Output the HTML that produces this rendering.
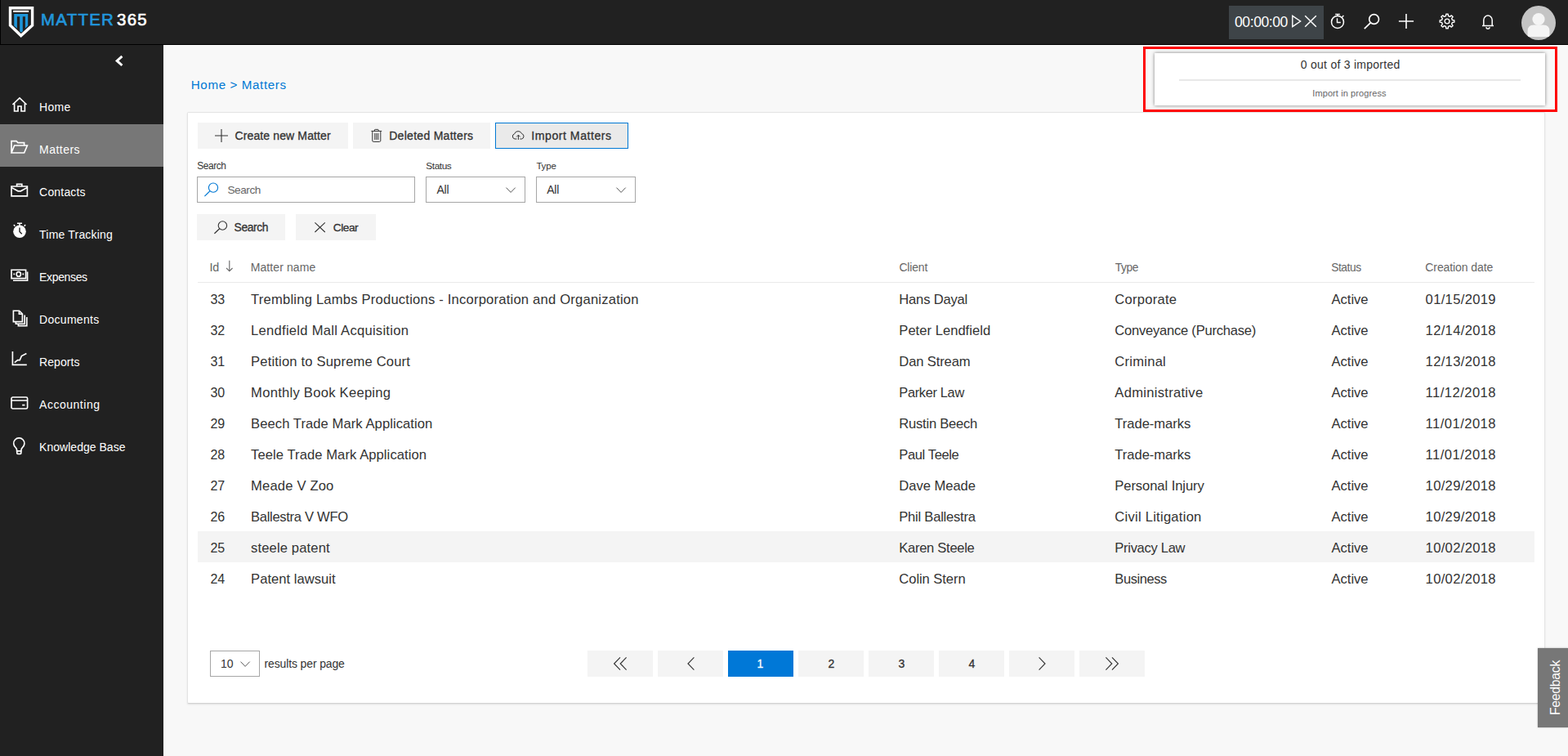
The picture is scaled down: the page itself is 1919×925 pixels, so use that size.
<!DOCTYPE html>
<html lang="en">
<head>
<meta charset="utf-8">
<title>Matter365 - Matters</title>
<style>
html,body{margin:0;padding:0}
body{width:1919px;height:925px;overflow:hidden;position:relative;background:#f8f8f8;font-family:"Liberation Sans", sans-serif;color:#333}
.a{position:absolute;box-sizing:border-box}
.t{position:absolute;white-space:pre;color:#333}
svg{overflow:visible}
.g{display:contents}
a.g{text-decoration:none;color:inherit}
</style>
</head>
<body>
<header class="g">
<div class="a" style="left:0px;top:0px;width:1919px;height:55px;background:#212121;border-bottom:1px solid #000;border-left:1px solid #000;"></div>
<svg class="a" style="left:10px;top:7px;" width="32" height="40" viewBox="0 0 32 40">
<path d="M2.5 2.7 H29.6 V24 L15.7 36.6 L2.5 24 Z" fill="none" stroke="#fff" stroke-width="3.4" stroke-linejoin="miter"/>
<rect x="6.2" y="5.8" width="18.9" height="2.2" fill="#fff"/>
<path d="M7.25 10.1 H24.2 V24.6 L20.9 27.8 V13.3 H17.8 V31.2 L16 32.8 L14.2 31.2 V13.3 H10.9 V27.8 L7.25 24.6 Z" fill="#1e96d9"/>
</svg>
<span class="t" style="left:50.10px;top:14.00px;font-size:20.4px;line-height:20.4px;letter-spacing:1.283px;color:#2196dc;-webkit-text-stroke:0.65px currentColor;">MATTER</span>
<span class="t" style="left:143.10px;top:14.00px;font-size:20.4px;line-height:20.4px;letter-spacing:1.210px;color:#fff;-webkit-text-stroke:0.65px currentColor;">365</span>
<div class="a" style="left:1504px;top:7px;width:116px;height:41px;background:#3e4448;"></div>
<span class="t" style="left:1511.00px;top:19.00px;font-size:17.57px;line-height:17.57px;letter-spacing:-0.428px;color:#fff;">00:00:00</span>
<svg class="a" style="left:1580px;top:17px;" width="14" height="18" viewBox="0 0 14 18"><path d="M1.8 2.4 L11.6 9 L1.8 15.6 Z" fill="none" stroke="#fff" stroke-width="1.4" stroke-linejoin="miter"/></svg>
<svg class="a" style="left:1596px;top:18px;" width="16" height="16" viewBox="0 0 16 16"><path d="M1.2 1.2 L14.8 14.8 M14.8 1.2 L1.2 14.8" fill="none" stroke="#fff" stroke-width="1.5"/></svg>
<svg class="a" style="left:1627px;top:15px;" width="20" height="21" viewBox="0 0 20 21"><circle cx="10" cy="11.9" r="7.5" fill="none" stroke="#fff" stroke-width="1.5"/><path d="M7.2 2.5 H12.8 M10 2.5 V4.4 M9.5 7.2 V12.5 H13.8 M15.6 6 L17.4 3.9" fill="none" stroke="#fff" stroke-width="1.4"/></svg>
<svg class="a" style="left:1668px;top:16px;" width="22" height="20" viewBox="0 0 22 20"><circle cx="13.6" cy="7.5" r="5.9" fill="none" stroke="#fff" stroke-width="1.6"/><path d="M9.6 11.6 L1.8 19.2" stroke="#fff" stroke-width="1.7" fill="none"/></svg>
<svg class="a" style="left:1711px;top:16px;" width="20" height="20" viewBox="0 0 20 20"><path d="M10 0.9 V19.1 M0.9 10 H19.1" stroke="#fff" stroke-width="1.6" fill="none"/></svg>
<svg class="a" style="left:1761px;top:16px;" width="20" height="20" viewBox="0 0 20 20"><path d="M16.42 8.46 L18.82 8.82 L18.82 11.18 L16.42 11.54 L15.63 13.45 L17.08 15.40 L15.40 17.08 L13.45 15.63 L11.54 16.42 L11.18 18.82 L8.82 18.82 L8.46 16.42 L6.55 15.63 L4.60 17.08 L2.92 15.40 L4.37 13.45 L3.58 11.54 L1.18 11.18 L1.18 8.82 L3.58 8.46 L4.37 6.55 L2.92 4.60 L4.60 2.92 L6.55 4.37 L8.46 3.58 L8.82 1.18 L11.18 1.18 L11.54 3.58 L13.45 4.37 L15.40 2.92 L17.08 4.60 L15.63 6.55 Z" fill="none" stroke="#fff" stroke-width="1.4" stroke-linejoin="round"/><circle cx="10" cy="10" r="2.9" fill="none" stroke="#fff" stroke-width="1.4"/></svg>
<svg class="a" style="left:1812px;top:17px;" width="18" height="19" viewBox="0 0 18 19"><path d="M2 14.4 H16 M3.8 14.2 V7.6 A5.2 5.6 0 0 1 14.2 7.6 V14.2 M7 16.2 A2 2 0 0 0 11 16.2" fill="none" stroke="#fff" stroke-width="1.5"/></svg>
<svg class="a" style="left:1862px;top:7px" width="42" height="42" viewBox="0 0 42 42"><defs><clipPath id="av"><circle cx="21" cy="21" r="21"/></clipPath></defs><circle cx="21" cy="21" r="21" fill="#c4c4c4"/><g clip-path="url(#av)" fill="#f4f4f4"><circle cx="21" cy="16.5" r="7.6"/><path d="M7.6 38 V31 Q7.6 23.5 15 23.5 H27 Q34.4 23.5 34.4 31 V38 Z"/></g></svg>
</header>
<nav class="g">
<div class="a" style="left:0px;top:55px;width:200px;height:870px;background:#212121;"></div>
<svg class="a" style="left:140px;top:67px;" width="12" height="15" viewBox="0 0 12 15"><path d="M9.4 1.8 L3.2 7.4 L9.4 13" fill="none" stroke="#fff" stroke-width="3"/></svg>
<a class="g nav-item">
<svg class="a" style="left:14px;top:118px;" width="20" height="20" viewBox="0 0 20 20"><path d="M1.4 10 L10 1.8 L18.6 10 M3.6 8.6 V18 H8 V12 H12 V18 H16.4 V8.6" fill="none" stroke="#fff" stroke-width="1.65"/></svg>
<span class="t" style="left:48.10px;top:124.00px;font-size:14px;line-height:14px;letter-spacing:0.280px;color:#fff;">Home</span>
</a>
<a class="g nav-item active">
<div class="a" style="left:0px;top:152px;width:200px;height:52px;background:#777777;"></div>
<svg class="a" style="left:13px;top:171px;" width="22" height="18" viewBox="0 0 22 18"><path d="M1 16 V1.6 H7 L9 3.6 H16.6 V7 M1 16 L4.6 7 H20.4 L16.6 16 Z" fill="none" stroke="#fff" stroke-width="1.65"/></svg>
<span class="t" style="left:48.10px;top:176.00px;font-size:14px;line-height:14px;letter-spacing:0.454px;color:#fff;">Matters</span>
</a>
<a class="g nav-item">
<svg class="a" style="left:13px;top:224px;" width="22" height="17" viewBox="0 0 22 17"><path d="M1 4 H20.4 V15.8 H1 Z M7.6 4 V1.4 H13.8 V4 M1 5.4 L9 9.8 H12.4 L20.4 5.4" fill="none" stroke="#fff" stroke-width="1.65"/></svg>
<span class="t" style="left:48.10px;top:228.00px;font-size:14px;line-height:14px;letter-spacing:0.179px;color:#fff;">Contacts</span>
</a>
<a class="g nav-item">
<svg class="a" style="left:15px;top:272px;" width="18" height="20" viewBox="0 0 18 20"><circle cx="9" cy="11.2" r="7.8" fill="#fff"/><path d="M6 1.2 H12 M9 1.2 V4 M14.6 4.6 L16.2 3 M1.8 3 L3.4 4.6" stroke="#fff" stroke-width="1.5" fill="none"/><path d="M9 6.4 V11.4 L11.8 14.2" stroke="#212121" stroke-width="1.4" fill="none"/></svg>
<span class="t" style="left:48.10px;top:280.00px;font-size:14px;line-height:14px;letter-spacing:0.195px;color:#fff;">Time Tracking</span>
</a>
<a class="g nav-item">
<svg class="a" style="left:13px;top:329px;" width="22" height="16" viewBox="0 0 22 16"><path d="M1 1.2 H18.6 V11.6 H1 Z M3 14.2 H20.6 V3.4" fill="none" stroke="#fff" stroke-width="1.65"/><ellipse cx="9.8" cy="6.4" rx="2.6" ry="2.8" fill="none" stroke="#fff" stroke-width="1.65"/><path d="M3.4 6.4 H5.2 M14.4 6.4 H16.2" fill="none" stroke="#fff" stroke-width="1.65"/></svg>
<span class="t" style="left:48.10px;top:332.00px;font-size:14px;line-height:14px;letter-spacing:-0.355px;color:#fff;">Expenses</span>
</a>
<a class="g nav-item">
<svg class="a" style="left:15px;top:379px;" width="19" height="21" viewBox="0 0 19 21"><path d="M1.4 1.2 H8.6 L12.4 5 V14.6 H1.4 Z M8.4 1.2 V5.2 H12.4 M4.4 14.8 V17.2 H15.2 V6.6 M7.4 17.4 V19.6 H17.8 V9" fill="none" stroke="#fff" stroke-width="1.65"/></svg>
<span class="t" style="left:48.10px;top:384.00px;font-size:14px;line-height:14px;letter-spacing:0.287px;color:#fff;">Documents</span>
</a>
<a class="g nav-item">
<svg class="a" style="left:14px;top:429px;" width="20" height="19" viewBox="0 0 20 19"><path d="M1.4 1 V17.4 H18.8 M3.8 14.6 L7.6 11.6 H10.2 L12.4 6.6 L18.4 3.4" fill="none" stroke="#fff" stroke-width="1.65"/></svg>
<span class="t" style="left:48.10px;top:436.00px;font-size:14px;line-height:14px;letter-spacing:0.063px;color:#fff;">Reports</span>
</a>
<a class="g nav-item">
<svg class="a" style="left:13px;top:485px;" width="22" height="16" viewBox="0 0 22 16"><rect x="1" y="1" width="19.6" height="14" rx="1.6" fill="none" stroke="#fff" stroke-width="1.65"/><path d="M1 5 H20.6 M14.2 10.6 H17.4" fill="none" stroke="#fff" stroke-width="1.65"/></svg>
<span class="t" style="left:48.10px;top:488.00px;font-size:14.02px;line-height:14.02px;letter-spacing:0.505px;color:#fff;">Accounting</span>
</a>
<a class="g nav-item">
<svg class="a" style="left:15px;top:535px;" width="17" height="22" viewBox="0 0 17 22"><path d="M5.6 16.8 V15.4 Q5.6 14 4.2 12.6 A6.6 6.6 0 1 1 12.4 12.6 Q11 14 11 15.4 V16.8 Z M5.8 17 V19.4 Q5.8 20.3 6.8 20.3 H9.8 Q10.8 20.3 10.8 19.4 V17" fill="none" stroke="#fff" stroke-width="1.65"/></svg>
<span class="t" style="left:48.10px;top:540.00px;font-size:14px;line-height:14px;letter-spacing:0.024px;color:#fff;">Knowledge Base</span>
</a>
</nav>
<main class="g">
<div class="a" style="left:200px;top:55px;width:1719px;height:870px;background:#f8f8f8;"></div>
<span class="t" style="left:233.80px;top:96.00px;font-size:15.2px;line-height:15.2px;letter-spacing:0.595px;color:#0078d4;">Home &gt; Matters</span>
<section class="g panel">
<div class="a" style="left:229px;top:137px;width:1662px;height:724px;background:#fff;border:1px solid #e4e4e4;border-bottom-color:#d2d2d2;border-radius:2px;box-shadow:0 1px 2px rgba(0,0,0,.1);"></div>
<div class="a" style="left:242px;top:150px;width:184px;height:32px;background:#f4f4f4;"></div>
<svg class="a" style="left:263px;top:158px;" width="16" height="16" viewBox="0 0 16 16"><path d="M8 0 V16 M0 8 H16" stroke="#333" stroke-width="1.1" fill="none"/></svg>
<span class="t" style="left:287.50px;top:159.00px;font-size:14px;line-height:14px;letter-spacing:0.125px;-webkit-text-stroke:0.3px currentColor;">Create new Matter</span>
<div class="a" style="left:432px;top:150px;width:168px;height:32px;background:#f4f4f4;"></div>
<svg class="a" style="left:454px;top:157px;" width="14" height="18" viewBox="0 0 14 18"><path d="M0.4 3.4 H13.2 M4.4 3.2 V2 Q4.4 1.4 5.2 1.4 H8.4 Q9.2 1.4 9.2 2 V3.2 M1.8 3.6 V15.2 Q1.8 16.4 3.2 16.4 H10.4 Q11.8 16.4 11.8 15.2 V3.6 M4.8 6 V14 M6.8 6 V14 M8.8 6 V14" fill="none" stroke="#333" stroke-width="1"/></svg>
<span class="t" style="left:476.20px;top:159.00px;font-size:14px;line-height:14px;letter-spacing:0.291px;-webkit-text-stroke:0.3px currentColor;">Deleted Matters</span>
<div class="a" style="left:606px;top:150px;width:163px;height:32px;background:#eaeaea;border:1px solid #0078d4;"></div>
<svg class="a" style="left:626px;top:159px;" width="17" height="13" viewBox="0 0 17 13"><path d="M6.4 11 H4 A3.2 3.2 0 0 1 3.6 4.8 A4.8 4.8 0 0 1 12.6 4.6 A3.3 3.3 0 0 1 12.4 11 H10.4 M8.4 12 V6.4 M6.2 8.4 L8.4 6.2 L10.6 8.4" fill="none" stroke="#333" stroke-width="1"/></svg>
<span class="t" style="left:650.30px;top:159.00px;font-size:14.15px;line-height:14.15px;letter-spacing:0.509px;-webkit-text-stroke:0.3px currentColor;">Import Matters</span>
<span class="t" style="left:241.30px;top:198.00px;font-size:11.86px;line-height:11.86px;letter-spacing:-0.416px;">Search</span>
<span class="t" style="left:521.30px;top:198.00px;font-size:11.82px;line-height:11.82px;letter-spacing:-0.416px;">Status</span>
<span class="t" style="left:656.40px;top:198.00px;font-size:11.48px;line-height:11.48px;letter-spacing:-0.162px;">Type</span>
<div class="a" style="left:241px;top:216px;width:267px;height:32px;background:#fff;border:1px solid #a6a6a6;"></div>
<svg class="a" style="left:250px;top:223px;" width="18" height="18" viewBox="0 0 18 18"><circle cx="11" cy="6.6" r="5.6" fill="none" stroke="#0078d4" stroke-width="1.1"/><path d="M7 10.6 L0.4 17.2" stroke="#0078d4" stroke-width="1.2" fill="none"/></svg>
<span class="t" style="left:278.50px;top:226.00px;font-size:13.59px;line-height:13.59px;letter-spacing:-0.434px;color:#666;">Search</span>
<div class="a" style="left:521px;top:216px;width:122px;height:32px;background:#fff;border:1px solid #a6a6a6;"></div>
<span class="t" style="left:534.40px;top:225.00px;font-size:14px;line-height:14px;letter-spacing:-0.174px;">All</span>
<svg class="a" style="left:619px;top:229px;" width="12.2" height="7" viewBox="0 0 12.2 7"><path d="M0.5 0.6 L6.1 6.4 L11.7 0.6" fill="none" stroke="#555" stroke-width="1"/></svg>
<div class="a" style="left:656px;top:216px;width:122px;height:32px;background:#fff;border:1px solid #a6a6a6;"></div>
<span class="t" style="left:669.20px;top:225.00px;font-size:14px;line-height:14px;letter-spacing:-0.174px;">All</span>
<svg class="a" style="left:754.4px;top:229px;" width="12.2" height="7" viewBox="0 0 12.2 7"><path d="M0.5 0.6 L6.1 6.4 L11.7 0.6" fill="none" stroke="#555" stroke-width="1"/></svg>
<div class="a" style="left:241px;top:262px;width:108px;height:32px;background:#f4f4f4;"></div>
<svg class="a" style="left:262px;top:270px;" width="17" height="16" viewBox="0 0 17 16"><circle cx="10.4" cy="6" r="5.2" fill="none" stroke="#333" stroke-width="1.1"/><path d="M6.7 9.7 L0.4 15.8" stroke="#333" stroke-width="1.2" fill="none"/></svg>
<span class="t" style="left:286.60px;top:272.00px;font-size:13.85px;line-height:13.85px;letter-spacing:-0.413px;-webkit-text-stroke:0.3px currentColor;">Search</span>
<div class="a" style="left:362px;top:262px;width:98px;height:32px;background:#f4f4f4;"></div>
<svg class="a" style="left:384.6px;top:272px;" width="13" height="12.4" viewBox="0 0 13 12.4"><path d="M0.4 0.4 L12.8 12 M12.8 0.4 L0.4 12" stroke="#333" stroke-width="1.1" fill="none"/></svg>
<span class="t" style="left:407.70px;top:272.00px;font-size:13.67px;line-height:13.67px;letter-spacing:-0.421px;-webkit-text-stroke:0.3px currentColor;">Clear</span>
<div class="g table" role="table">
<div class="g thead" role="row">
<span class="t" style="left:256.60px;top:320.00px;font-size:14.3px;line-height:14.3px;letter-spacing:-0.372px;color:#666;">Id</span>
<svg class="a" style="left:276px;top:318px;" width="10" height="15" viewBox="0 0 10 15"><path d="M4.8 0.8 V13.6 M1.1 10 L4.8 13.8 L8.5 10" fill="none" stroke="#666" stroke-width="1.1"/></svg>
<span class="t" style="left:306.70px;top:320.00px;font-size:14px;line-height:14px;letter-spacing:0.100px;color:#666;">Matter name</span>
<span class="t" style="left:1100.40px;top:320.00px;font-size:14px;line-height:14px;letter-spacing:-0.181px;color:#666;">Client</span>
<span class="t" style="left:1364.80px;top:321.00px;font-size:13.79px;line-height:13.79px;letter-spacing:-0.437px;color:#666;">Type</span>
<span class="t" style="left:1629.20px;top:321.00px;font-size:13.76px;line-height:13.76px;letter-spacing:-0.421px;color:#666;">Status</span>
<span class="t" style="left:1744.30px;top:320.00px;font-size:14px;line-height:14px;letter-spacing:-0.089px;color:#666;">Creation date</span>
</div>
<div class="a" style="left:242px;top:345px;width:1636px;height:1px;background:#eaeaea;"></div>
<div class="g row" role="row">
<span class="t" style="left:257.40px;top:359.00px;font-size:16px;line-height:16px;">33</span>
<span class="t" style="left:307.10px;top:359.00px;font-size:16.6px;line-height:16.6px;letter-spacing:0.204px;">Trembling Lambs Productions - Incorporation and Organization</span>
<span class="t" style="left:1100.30px;top:359.00px;font-size:16.6px;line-height:16.6px;letter-spacing:-0.198px;">Hans Dayal</span>
<span class="t" style="left:1364.30px;top:359.00px;font-size:16.6px;line-height:16.6px;letter-spacing:0.242px;">Corporate</span>
<span class="t" style="left:1629.60px;top:359.00px;font-size:16.6px;line-height:16.6px;letter-spacing:-0.052px;">Active</span>
<span class="t" style="left:1744.60px;top:359.00px;font-size:16.6px;line-height:16.6px;letter-spacing:0.320px;">01/15/2019</span>
</div>
<div class="g row" role="row">
<span class="t" style="left:257.40px;top:397.00px;font-size:16px;line-height:16px;">32</span>
<span class="t" style="left:307.10px;top:397.00px;font-size:16.6px;line-height:16.6px;letter-spacing:0.259px;">Lendfield Mall Acquisition</span>
<span class="t" style="left:1100.30px;top:397.00px;font-size:16.6px;line-height:16.6px;letter-spacing:0.014px;">Peter Lendfield</span>
<span class="t" style="left:1364.30px;top:397.00px;font-size:16.6px;line-height:16.6px;letter-spacing:-0.254px;">Conveyance (Purchase)</span>
<span class="t" style="left:1629.60px;top:397.00px;font-size:16.6px;line-height:16.6px;letter-spacing:-0.052px;">Active</span>
<span class="t" style="left:1744.60px;top:397.00px;font-size:16.6px;line-height:16.6px;letter-spacing:0.320px;">12/14/2018</span>
</div>
<div class="g row" role="row">
<span class="t" style="left:257.40px;top:435.00px;font-size:16px;line-height:16px;">31</span>
<span class="t" style="left:307.10px;top:435.00px;font-size:16.6px;line-height:16.6px;letter-spacing:0.162px;">Petition to Supreme Court</span>
<span class="t" style="left:1100.30px;top:435.00px;font-size:16.6px;line-height:16.6px;letter-spacing:-0.135px;">Dan Stream</span>
<span class="t" style="left:1364.30px;top:435.00px;font-size:16.6px;line-height:16.6px;letter-spacing:0.234px;">Criminal</span>
<span class="t" style="left:1629.60px;top:435.00px;font-size:16.6px;line-height:16.6px;letter-spacing:-0.052px;">Active</span>
<span class="t" style="left:1744.60px;top:435.00px;font-size:16.6px;line-height:16.6px;letter-spacing:0.320px;">12/13/2018</span>
</div>
<div class="g row" role="row">
<span class="t" style="left:257.40px;top:473.00px;font-size:16px;line-height:16px;">30</span>
<span class="t" style="left:307.10px;top:473.00px;font-size:16.6px;line-height:16.6px;letter-spacing:0.257px;">Monthly Book Keeping</span>
<span class="t" style="left:1100.30px;top:472.00px;font-size:16.35px;line-height:16.35px;letter-spacing:-0.306px;">Parker Law</span>
<span class="t" style="left:1364.30px;top:473.00px;font-size:16.6px;line-height:16.6px;letter-spacing:0.279px;">Administrative</span>
<span class="t" style="left:1629.60px;top:473.00px;font-size:16.6px;line-height:16.6px;letter-spacing:-0.052px;">Active</span>
<span class="t" style="left:1744.60px;top:473.00px;font-size:16.6px;line-height:16.6px;letter-spacing:0.457px;">11/12/2018</span>
</div>
<div class="g row" role="row">
<span class="t" style="left:257.40px;top:511.00px;font-size:16px;line-height:16px;">29</span>
<span class="t" style="left:307.10px;top:511.00px;font-size:16.6px;line-height:16.6px;letter-spacing:0.065px;">Beech Trade Mark Application</span>
<span class="t" style="left:1100.30px;top:511.00px;font-size:16.6px;line-height:16.6px;letter-spacing:-0.242px;">Rustin Beech</span>
<span class="t" style="left:1364.30px;top:511.00px;font-size:16.6px;line-height:16.6px;letter-spacing:-0.043px;">Trade-marks</span>
<span class="t" style="left:1629.60px;top:511.00px;font-size:16.6px;line-height:16.6px;letter-spacing:-0.052px;">Active</span>
<span class="t" style="left:1744.60px;top:511.00px;font-size:16.6px;line-height:16.6px;letter-spacing:0.457px;">11/01/2018</span>
</div>
<div class="g row" role="row">
<span class="t" style="left:257.40px;top:549.00px;font-size:16px;line-height:16px;">28</span>
<span class="t" style="left:307.10px;top:549.00px;font-size:16.6px;line-height:16.6px;letter-spacing:0.068px;">Teele Trade Mark Application</span>
<span class="t" style="left:1100.30px;top:549.00px;font-size:16.59px;line-height:16.59px;letter-spacing:-0.400px;">Paul Teele</span>
<span class="t" style="left:1364.30px;top:549.00px;font-size:16.6px;line-height:16.6px;letter-spacing:-0.043px;">Trade-marks</span>
<span class="t" style="left:1629.60px;top:549.00px;font-size:16.6px;line-height:16.6px;letter-spacing:-0.052px;">Active</span>
<span class="t" style="left:1744.60px;top:549.00px;font-size:16.6px;line-height:16.6px;letter-spacing:0.457px;">11/01/2018</span>
</div>
<div class="g row" role="row">
<span class="t" style="left:257.40px;top:587.00px;font-size:16px;line-height:16px;">27</span>
<span class="t" style="left:307.10px;top:587.00px;font-size:16.6px;line-height:16.6px;letter-spacing:0.161px;">Meade V Zoo</span>
<span class="t" style="left:1100.30px;top:587.00px;font-size:16.6px;line-height:16.6px;letter-spacing:-0.040px;">Dave Meade</span>
<span class="t" style="left:1364.30px;top:587.00px;font-size:16.6px;line-height:16.6px;letter-spacing:-0.084px;">Personal Injury</span>
<span class="t" style="left:1629.60px;top:587.00px;font-size:16.6px;line-height:16.6px;letter-spacing:-0.052px;">Active</span>
<span class="t" style="left:1744.60px;top:587.00px;font-size:16.6px;line-height:16.6px;letter-spacing:0.320px;">10/29/2018</span>
</div>
<div class="g row" role="row">
<span class="t" style="left:257.40px;top:625.00px;font-size:16px;line-height:16px;">26</span>
<span class="t" style="left:307.10px;top:625.00px;font-size:16.6px;line-height:16.6px;letter-spacing:-0.325px;">Ballestra V WFO</span>
<span class="t" style="left:1100.30px;top:625.00px;font-size:16.6px;line-height:16.6px;letter-spacing:-0.247px;">Phil Ballestra</span>
<span class="t" style="left:1364.30px;top:625.00px;font-size:16.6px;line-height:16.6px;letter-spacing:0.244px;">Civil Litigation</span>
<span class="t" style="left:1629.60px;top:625.00px;font-size:16.6px;line-height:16.6px;letter-spacing:-0.052px;">Active</span>
<span class="t" style="left:1744.60px;top:625.00px;font-size:16.6px;line-height:16.6px;letter-spacing:0.320px;">10/29/2018</span>
</div>
<div class="g row" role="row">
<div class="a" style="left:242px;top:650px;width:1636px;height:38px;background:#f4f4f4;"></div>
<span class="t" style="left:257.40px;top:663.00px;font-size:16px;line-height:16px;">25</span>
<span class="t" style="left:307.10px;top:663.00px;font-size:16.6px;line-height:16.6px;letter-spacing:0.124px;">steele patent</span>
<span class="t" style="left:1100.30px;top:663.00px;font-size:16.6px;line-height:16.6px;letter-spacing:-0.310px;">Karen Steele</span>
<span class="t" style="left:1364.30px;top:663.00px;font-size:16.57px;line-height:16.57px;letter-spacing:-0.302px;">Privacy Law</span>
<span class="t" style="left:1629.60px;top:663.00px;font-size:16.6px;line-height:16.6px;letter-spacing:-0.052px;">Active</span>
<span class="t" style="left:1744.60px;top:663.00px;font-size:16.6px;line-height:16.6px;letter-spacing:0.320px;">10/02/2018</span>
</div>
<div class="g row" role="row">
<span class="t" style="left:257.40px;top:701.00px;font-size:16px;line-height:16px;">24</span>
<span class="t" style="left:307.10px;top:701.00px;font-size:16.6px;line-height:16.6px;letter-spacing:0.016px;">Patent lawsuit</span>
<span class="t" style="left:1100.30px;top:701.00px;font-size:16.6px;line-height:16.6px;letter-spacing:-0.066px;">Colin Stern</span>
<span class="t" style="left:1364.30px;top:700.00px;font-size:16.49px;line-height:16.49px;letter-spacing:-0.406px;">Business</span>
<span class="t" style="left:1629.60px;top:701.00px;font-size:16.6px;line-height:16.6px;letter-spacing:-0.052px;">Active</span>
<span class="t" style="left:1744.60px;top:701.00px;font-size:16.6px;line-height:16.6px;letter-spacing:0.320px;">10/02/2018</span>
</div>
</div>
<div class="g pager">
<div class="a" style="left:257px;top:796px;width:61px;height:32px;background:#fff;border:1px solid #a6a6a6;"></div>
<span class="t" style="left:270.00px;top:805.00px;font-size:14px;line-height:14px;">10</span>
<svg class="a" style="left:294px;top:809px;" width="12.2" height="7" viewBox="0 0 12.2 7"><path d="M0.5 0.6 L6.1 6.4 L11.7 0.6" fill="none" stroke="#555" stroke-width="1"/></svg>
<span class="t" style="left:323.60px;top:805.00px;font-size:14px;line-height:14px;letter-spacing:-0.140px;">results per page</span>
<div class="a" style="left:719px;top:796px;width:80px;height:32px;background:#f4f4f4;"></div>
<svg class="a" style="left:750.6px;top:804px;" width="16" height="16" viewBox="0 0 16 16"><path d="M8 0.4 L0.6 8 L8 15.6 M15.6 0.4 L8.2 8 L15.6 15.6" fill="none" stroke="#333" stroke-width="1.15"/></svg>
<div class="a" style="left:805px;top:796px;width:80px;height:32px;background:#f4f4f4;"></div>
<svg class="a" style="left:840.6px;top:804px;" width="9" height="16" viewBox="0 0 9 16"><path d="M8.4 0.4 L1 8 L8.4 15.6" fill="none" stroke="#333" stroke-width="1.15"/></svg>
<div class="a" style="left:891px;top:796px;width:80px;height:32px;background:#0078d7;"></div>
<span class="t" style="left:926.40px;top:805.00px;font-size:14px;line-height:14px;color:#fff;-webkit-text-stroke:0.3px currentColor;">1</span>
<div class="a" style="left:977px;top:796px;width:80px;height:32px;background:#f4f4f4;"></div>
<span class="t" style="left:1013.40px;top:805.00px;font-size:14px;line-height:14px;-webkit-text-stroke:0.3px currentColor;">2</span>
<div class="a" style="left:1063px;top:796px;width:80px;height:32px;background:#f4f4f4;"></div>
<span class="t" style="left:1099.40px;top:805.00px;font-size:14px;line-height:14px;-webkit-text-stroke:0.3px currentColor;">3</span>
<div class="a" style="left:1149px;top:796px;width:80px;height:32px;background:#f4f4f4;"></div>
<span class="t" style="left:1185.40px;top:805.00px;font-size:14px;line-height:14px;-webkit-text-stroke:0.3px currentColor;">4</span>
<div class="a" style="left:1235px;top:796px;width:80px;height:32px;background:#f4f4f4;"></div>
<svg class="a" style="left:1270.6px;top:804px;" width="9" height="16" viewBox="0 0 9 16"><path d="M0.6 0.4 L8 8 L0.6 15.6" fill="none" stroke="#333" stroke-width="1.15"/></svg>
<div class="a" style="left:1321px;top:796px;width:80px;height:32px;background:#f4f4f4;"></div>
<svg class="a" style="left:1353.4px;top:804px;" width="16" height="16" viewBox="0 0 16 16"><path d="M0.4 0.4 L7.8 8 L0.4 15.6 M8 0.4 L15.4 8 L8 15.6" fill="none" stroke="#333" stroke-width="1.15"/></svg>
</div>
</section>
</main>
<aside class="g import-status">
<div class="a" style="left:1399px;top:57px;width:507px;height:80px;background:#f8f8f8;border:3px solid #ff0000;"></div>
<div class="a" style="left:1413px;top:65px;width:478px;height:64px;background:#fff;box-shadow:0 0 4px rgba(0,0,0,.5);"></div>
<span class="t" style="left:1591.80px;top:72.00px;font-size:14px;line-height:14px;letter-spacing:0.264px;">0 out of 3 imported</span>
<div class="a" style="left:1443px;top:97px;width:418px;height:2px;background:#e8e8e8;"></div>
<span class="t" style="left:1606.30px;top:109.00px;font-size:11px;line-height:11px;letter-spacing:0.091px;color:#666;">Import in progress</span>
</aside>
<div class="g feedback">
<div class="a" style="left:1882px;top:793px;width:37px;height:97px;background:#777;box-shadow:0 0 2px rgba(0,0,0,.3);"></div>
<span class="t" style="left:1896.00px;top:875.10px;font-size:15.8px;line-height:15.8px;letter-spacing:-0.296px;color:#fff;transform-origin:0 0;transform:rotate(-90deg);">Feedback</span>
</div>
</body>
</html>
